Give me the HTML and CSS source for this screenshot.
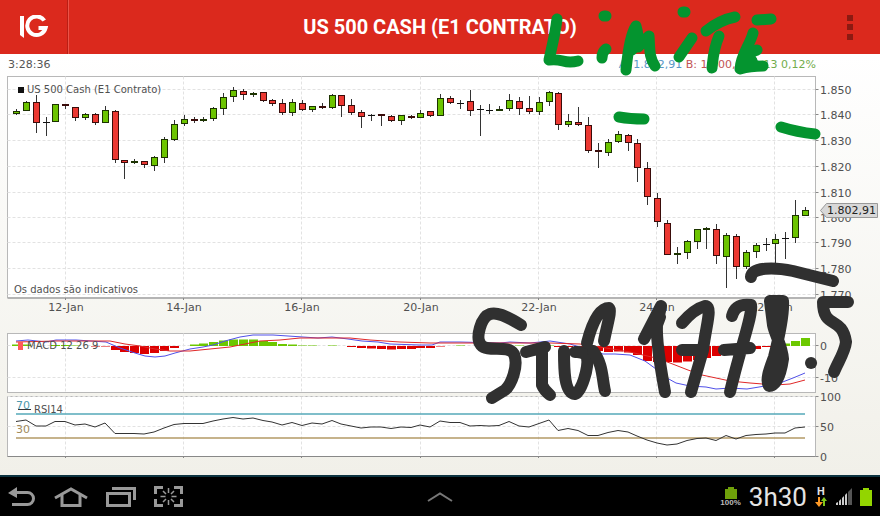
FILE: index.html
```
<!DOCTYPE html>
<html lang="pt">
<head>
  <meta charset="utf-8">
  <title>US 500 Cash (E1 Contrato)</title>
  <link rel="stylesheet" href="styles.css">
</head>
<body>
  <header class="topbar">
    <a class="logo" href="#" aria-label="IG">
      <svg width="30" height="24" viewBox="0 0 30 24">
        <path d="M1 1h4v22L1 20z" fill="#fff"/>
        <path d="M25.300 5.500A9.300 9.300 0 1 0 26.600 13H19.500" fill="none" stroke="#fff" stroke-width="4"/>
      </svg>
    </a>
    <h1 class="title">US 500 CASH (E1 CONTRATO)</h1>
    <button class="menu-btn" aria-label="Menu">
      <svg width="6" height="25" viewBox="0 0 6 25" fill="#8c1a12">
        <rect width="6" height="6"/>
        <rect y="9" width="6" height="6"/>
        <rect y="19" width="6" height="6"/>
      </svg>
    </button>
  </header>

  <main class="content">
    <div class="quote">
      <span class="time">3:28:36</span>
      <span class="prices">
        <span class="ask">A: 1.802,91</span>
        <span class="bid">B: 1.800,61</span>
        <span class="change">2,13 0,12%</span>
      </span>
    </div>

    <!-- The three panels share one coordinate space -->
    <svg class="chart" id="price" viewBox="0 74 880 252"></svg>
    <svg class="chart" id="macd" viewBox="0 326 880 68"></svg>
    <svg class="chart" id="rsi" viewBox="0 394 880 81"></svg>
  </main>

  <footer class="navbar">
    <div class="nav-keys">
      <button class="key" aria-label="Voltar">
        <svg width="28" height="20" viewBox="0 0 28 20">
          <path d="M0 6l9-6v4h10.500a7.500 7.500 0 0 1 0 15H4v-3h15.500a4.500 4.500 0 0 0 0-9H9v4z" fill="#999"/>
        </svg>
      </button>
      <button class="key" aria-label="Início">
        <svg width="34" height="20" viewBox="0 0 34 20" fill="none" stroke="#999" stroke-width="3">
          <path d="M1 11L17 2l16 9"/>
          <path d="M8 8v10.500h18V8"/>
        </svg>
      </button>
      <button class="key" aria-label="Recentes">
        <svg width="30" height="20" viewBox="0 0 30 20" fill="none" stroke="#999" stroke-width="3">
          <path d="M1.500 6.500h22v12h-22z"/>
          <path d="M6 1.500h22.500V13"/>
        </svg>
      </button>
      <button class="key" aria-label="Captura de tela">
        <svg width="29" height="21" viewBox="0 0 29 21" fill="none" stroke="#999" stroke-width="3">
          <path d="M1.500 8V1.500H9M20 1.500h7.500V8M1.500 13v6.500H9M20 19.500h7.500V13"/>
          <path d="M14.500 2v5M14.500 14v5M6.500 10.500h5M17.500 10.500h5M9 5l3 3M20 5l-3 3M9 16l3-3M20 16l-3-3" stroke-width="1.500"/>
        </svg>
      </button>
    </div>
    <button class="key" aria-label="Abrir painel">
      <svg width="26" height="10" viewBox="0 0 26 10">
        <path d="M1 9l12-7.500L25 9" fill="none" stroke="#777" stroke-width="2"/>
      </svg>
    </button>
    <div class="status">
      <span class="charge">
        <svg width="12" height="12" viewBox="0 0 12 12" fill="#6fa00a">
          <path d="M3 0h6v2h3v10H0V2h3z"/>
        </svg>
        <span>100%</span>
      </span>
      <span class="clock">3h30</span>
      <span class="network">
        <span>H</span>
        <svg width="12" height="10" viewBox="0 0 12 10">
          <path d="M3 0h2v5h3L4 10 0 5h3z" fill="#ff9a26"/>
          <path d="M8 9h2V4h2L9 0 6 4h2z" fill="#7fc51a"/>
        </svg>
      </span>
      <svg width="17" height="17" viewBox="0 0 17 17">
        <path d="M1 17v-2l2-1v3zM4 17v-4l2-2v6zM7 17v-7l2-2v9zM10 17V7l2-2v12z" fill="#ccc"/>
        <path d="M13 17V4l4-4v17z" fill="#555"/>
      </svg>
      <svg width="12" height="18" viewBox="0 0 12 18" fill="#93d500">
        <path d="M3 0h6v2h3v16H0V2h3z"/>
      </svg>
    </div>
  </footer>

  <!-- Hand-drawn notes on top of the screen -->
  <svg class="notes" viewBox="0 0 880 516">
    <g class="pen green">
      <path d="M557 19C555 35 552 46 549 60Q556 59 563 61T578 61"/>
      <path d="M604 16h2M606 49Q602 52 602 58"/>
      <path d="M626 70C628 50 631 33 636 26Q639 36 638 47L649 36C650 50 649 57 655 66M632 50l8 -12M634 36v10"/>
      <path d="M683 12h2M692 38L679 57"/>
      <path d="M706 31Q720 20 735 17M719 36C713 50 713 60 712 68"/>
      <path d="M757 20L771 19"/>
      <path d="M753 33C750 45 741 54 740 69Q750 66 763 66M757 50L746 54L744 64L752 61L747 54"/>
      <path d="M619 117Q630 119 644 119M781 127Q797 132 815 134"/>
    </g>
    <g class="pen dark">
      <path d="M751 277C752 267 774 267 793 271L833 281"/>
      <path d="M521 325C505 315 496 312 490 314C481 317 475 338 481 345C488 353 508 344 514 354C519 366 511 385 505 390L492 398"/>
      <path d="M526 352L545 347M542 350V385Q544 390 550 395"/>
      <path d="M564 351C564 368 564 393 575 394C581 393 589 368 587 357C584 351 578 352 575 352"/>
      <path d="M587 343C592 323 599 308 609 308C612 310 607 325 604 341M593 351C603 364 602 378 605 391"/>
      <path d="M644 339L661 306L657 325C656 345 662 375 665 392M657 325l3 -8"/>
      <path d="M682 323Q694 309 705 306C713 306 706 325 703 350L691 392M682 350h21"/>
      <path d="M732 316C735 305 743 304 751 305C753 315 741 345 730 392M724 350L750 348"/>
      <path d="M770 301H783C784 315 777 345 774 357C770 368 765 380 769 386C777 386 781 373 783 359C782 345 775 335 773 325L770 301L781 308L775 325"/>
      <path d="M811 363h0.100"/>
      <path d="M848 302H823C823 330 842 315 846 342C845 352 838 362 834 372"/>
    </g>
  </svg>

  <script src="chart.js"></script>
</body>
</html>
```
FILE: styles.css
```
* {
  box-sizing: border-box;
}
body {
  margin: 0;
  min-height: 100vh;
  display: flex;
  flex-direction: column;
  position: relative;
  font-family: "DejaVu Sans", sans-serif;
  background: #000;
}
button {
  border: none;
  background: none;
  padding: 0;
  cursor: pointer;
}
svg {
  display: block;
}
/* Top bar */
.topbar {
  display: grid;
  grid-template-columns: 69px 1fr 69px;
  height: 54px;
  background: #db291d;
}
.logo {
  display: flex;
  align-items: center;
  padding-left: 19px;
  border-right: 1px solid #ec5348;
  box-shadow: inset -1px 0 #b81f15;
}
.title {
  margin: 0;
  align-self: center;
  text-align: center;
  color: #fff;
  font-family: Roboto, sans-serif;
  font-size: 20px;
  font-weight: 700;
  line-height: 54px;
  white-space: nowrap;
}
.menu-btn {
  display: flex;
  align-items: center;
  justify-content: center;
  padding-left: 8px;
}
/* Quote row and charts */
.content {
  flex: 1;
  background: linear-gradient(to bottom, #fff, #f1f0e9);
}
.quote {
  display: flex;
  justify-content: space-between;
  align-items: center;
  height: 20px;
  padding: 0 64px 0 8px;
  font-size: 11px;
  color: #555;
}
.ask {
  color: #5a98c8;
}
.bid {
  color: #c25454;
}
.change {
  color: #72ac4c;
}
.chart {
  width: 100%;
  height: auto;
  overflow: visible;
}
.chart text {
  font-size: 10px;
  fill: #505050;
}
.chart .date {
  font-size: 11px;
  text-anchor: middle;
}
.chart .scale {
  font-size: 11px;
}
.chart .tag-text {
  font-size: 11px;
  fill: #222;
}
.chart .over {
  fill: #4d9aae;
  font-size: 11px;
}
.chart .under {
  fill: #a08a5c;
  font-size: 11px;
}
.panel {
  fill: #fff;
  stroke: #b8b8b8;
}
.grid {
  stroke: #e2e2e2;
  stroke-dasharray: 3 2;
}
.axis {
  stroke: #b4b4b4;
  stroke-width: 2;
}
.tick {
  stroke: #888;
}
.wick {
  stroke: #333;
}
.up {
  fill: #6cc400;
  stroke: #1c3300;
}
.down {
  fill: #ec3832;
  stroke: #3a0c0a;
}
.doji {
  fill: #111;
  stroke: none;
}
.bar-up {
  fill: #6cc800;
}
.bar-down {
  fill: #dc0000;
}
.line {
  fill: none;
  stroke: #333;
}
.macd-line {
  stroke: #5050e8;
}
.signal-line {
  stroke: #e02828;
}
.over-line {
  stroke: #55a8b8;
  stroke-width: 1.5;
}
.under-line {
  stroke: #b39a66;
  stroke-width: 1.5;
}
.tag {
  fill: #d8d8d8;
  stroke: #999;
}
/* Navigation bar */
.navbar {
  display: grid;
  grid-template-columns: 1fr auto 1fr;
  align-items: center;
  height: 41px;
  padding: 0 8px;
  background: #000;
  border-top: 2px solid #0d3441;
}
.nav-keys {
  display: flex;
  align-items: center;
  gap: 18px;
}
.status {
  display: flex;
  align-items: center;
  justify-content: flex-end;
  gap: 8px;
  color: #e4e4e4;
}
.charge {
  display: flex;
  flex-direction: column;
  align-items: center;
  font: bold 8px/8px "Liberation Sans", sans-serif;
  color: #bbb;
}
.clock {
  font: 26px/30px Roboto, sans-serif;
}
.network {
  display: flex;
  flex-direction: column;
  align-items: center;
  font: bold 11px/10px Roboto, sans-serif;
}
/* Pen notes */
.notes {
  position: absolute;
  top: 0;
  left: 0;
  width: 100%;
  pointer-events: none;
}
.pen {
  fill: none;
  stroke-width: 11;
  stroke-linecap: round;
  stroke-linejoin: round;
}
.green {
  stroke: #04942f;
}
.dark {
  stroke: #303030;
  stroke-width: 12;
}
```
FILE: chart.js
```
const LEFT = 7.5;
const RIGHT = 815.5;
const dates = [[66, '12-Jan'], [184, '14-Jan'], [302, '16-Jan'], [421, '20-Jan'], [539, '22-Jan'], [657, '24-Jan'], [775, '26-Jan']];

// high, top, bottom, low, direction
const candles = [
  [109,111,114,115,'u'], [101,102,111,111,'u'], [95,102,123,133,'d'], [117,122,123,136,'k'], [104,104,122,122,'u'],
  [104,104,106,109,'d'], [107,107,118,121,'d'], [113,114,118,120,'u'], [113,114,123,125,'d'], [106,110,123,123,'u'],
  [110,111,160,163,'d'], [160,160,163,179,'d'], [159,161,163,164,'u'], [161,161,165,168,'d'], [156,157,166,171,'u'],
  [137,139,158,163,'u'], [120,124,140,141,'u'], [115,119,124,126,'u'], [117,119,121,123,'d'], [117,119,121,122,'u'],
  [107,108,119,121,'u'], [93,97,109,115,'u'], [87,90,97,102,'u'], [89,91,95,100,'d'], [92,93,95,97,'u'],
  [92,92,101,102,'d'], [99,100,104,106,'d'], [99,103,113,115,'d'], [99,102,113,116,'u'], [100,103,110,111,'d'],
  [106,106,110,112,'u'], [103,106,108,109,'d'], [94,95,108,109,'u'], [95,95,106,117,'d'], [99,105,113,115,'d'],
  [110,112,117,128,'d'], [114,115,116,121,'k'], [114,114,116,126,'d'], [115,116,121,122,'d'], [115,115,121,125,'u'],
  [115,116,118,119,'d'], [110,113,118,118,'u'], [111,111,116,117,'d'], [94,98,116,116,'u'], [96,98,103,104,'d'],
  [100,103,104,109,'k'], [90,101,111,116,'d'], [105,109,110,136,'k'], [104,110,111,114,'k'], [106,109,111,111,'u'],
  [94,100,109,111,'u'], [97,101,109,115,'d'], [96,108,112,114,'d'], [97,102,112,115,'u'], [91,92,102,106,'u'],
  [92,93,125,130,'d'], [114,121,125,127,'u'], [107,122,125,126,'d'], [117,125,151,153,'d'], [143,150,152,168,'d'],
  [139,142,153,156,'u'], [131,134,142,143,'u'], [134,135,143,151,'d'], [139,143,168,182,'d'], [162,168,197,205,'d'],
  [193,198,222,227,'d'], [220,223,255,255,'d'], [247,253,255,264,'u'], [240,241,253,259,'u'], [229,229,242,249,'u'],
  [227,228,230,249,'u'], [224,229,256,264,'d'], [233,235,257,288,'u'], [234,236,267,279,'d'], [250,252,267,269,'u'],
  [243,245,252,258,'u'], [238,244,245,251,'k'], [234,239,244,268,'u'], [232,238,239,259,'k'], [200,215,238,243,'u'],
  [207,210,216,216,'u']
];

const histogram = [
  1.5, 1.5, 0, 0, 1, 1, 0.5, 0, -0.5, -0.5, -4, -6, -7, -8, -7, -5, -2, 0, 1.5, 2.5,
  4, 5.5, 6.5, 6.5, 6.5, 5, 4, 2, 1.5, 0.5, 0.5, 0, 0.5, 0, -1, -2, -2.5, -3, -3.5, -3,
  -3, -2, -2, -0.5, 0, 0.5, 0, 0.5, 0, 0, 0, 0.5, 0, 0.5, 0.5, -1, -1, -2, -3, -5,
  -6, -5.5, -6.5, -9, -15, -16, -16, -16.5, -15.5, -14, -12, -10, -9, -7, -5, -3, -1, -0.5, 2.5, 5,
  8
];

const macdLine = '16,341 28,340 46,342 56,340 76,340 106,342 120,348 135,353 145,356 155,357 165,356 175,353 190,349 203,347 213,345 225,341 240,337 253,335 273,335 303,337 318,338 332,337 348,339 362,341 378,342 390,344 420,345 432,345 440,342 460,342 500,343 510,342 530,343 550,341 570,344 590,350 603,354 615,354 630,355 645,361 656,369 667,378 676,383 690,386 706,387 716,389 730,388 747,389 765,386 780,383 793,378 805,373';
const signalLine = '16,342 56,341 110,341 125,344 140,346 155,349 170,351 190,351 210,349 230,347 245,344 260,341 280,340 300,338 350,338 370,340 400,342 430,343 550,343 580,344 600,347 630,352 656,358 670,363 688,370 702,375 716,378 730,381 750,383 775,385 790,384 805,380';

const rsi = [
  421.5, 420, 426, 426, 421.5, 421.5, 425, 424, 427, 423, 433.5, 433.5, 433.5, 434, 432, 428, 424.5, 423.5, 423.5, 423.5,
  421, 419, 417.5, 419, 418, 420.5, 422, 425, 422.5, 425.5, 423, 424, 420.5, 424, 426, 428, 427, 427, 428.5, 427,
  427.5, 425, 427, 421, 422.5, 422.5, 426, 425.5, 426, 425.5, 421.5, 426, 427, 423.5, 420, 430.5, 428.5, 430.5, 435.5, 435.5,
  432.5, 430.5, 432, 436, 440, 443, 445, 444, 440.5, 438.5, 438, 440.5, 435.5, 439, 435.5, 434.5, 434, 433, 433, 428,
  427
];

const xAt = i => Math.round(16 + i * 9.863);

const line = (cls, x1, y1, x2, y2) => `<line class="${cls}" x1="${x1}" y1="${y1}" x2="${x2}" y2="${y2}"/>`;
const rect = (cls, x, y, w, h) => `<rect class="${cls}" x="${x}" y="${y}" width="${w}" height="${h}"/>`;
const text = (cls, x, y, s) => `<text class="${cls}" x="${x}" y="${y}">${s}</text>`;

function panel(top, bottom, rows) {
  let out = rect('panel', LEFT, top, RIGHT - LEFT, bottom - top);
  dates.forEach(([x]) => out += line('grid', x - 0.5, top, x - 0.5, bottom));
  rows.forEach(([y, label]) => {
    out += line('grid', LEFT, y, RIGHT, y);
    out += line('tick', RIGHT, y, RIGHT + 3, y);
    out += text('scale', 820, y + 4, label);
  });
  return out;
}

function drawPrice() {
  const rows = [89.5, 114.5, 140.5, 166.5, 192.5, 217.5, 242.5, 268.5, 294.5].map((y, i) => [y, `1.${850 - i * 10}`]);
  let out = panel(76.5, 297.5, rows);
  out += line('axis', LEFT, 298, RIGHT, 298);
  dates.forEach(([x, label]) => {
    out += line('tick', x - 0.5, 298, x - 0.5, 300);
    out += text('date', x, 311, label);
  });
  candles.forEach(([high, top, bottom, low, dir], i) => {
    const x = xAt(i);
    out += line('wick', x + 0.5, high, x + 0.5, low);
    if (dir === 'k') {
      out += rect('doji', x - 3, top, 7, 1);
    } else {
      out += rect(dir === 'u' ? 'up' : 'down', x - 2.5, top + 0.5, 6, Math.max(bottom - top - 1, 1));
    }
  });
  out += rect('doji', 18, 87, 6, 6);
  out += text('', 27, 93, 'US 500 Cash (E1 Contrato)');
  out += text('', 14, 293, 'Os dados são indicativos');
  out += '<path class="tag" d="M820.5 210.500l6-7h51v14h-51z"/>';
  out += text('tag-text', 827, 214, '1.802,91');
  document.getElementById('price').innerHTML = out;
}

function drawMacd() {
  let out = panel(333.5, 392.5, [[345.5, '0'], [377.5, '-10']]);
  histogram.forEach((h, i) => {
    if (h) out += rect(h > 0 ? 'bar-up' : 'bar-down', xAt(i) - 4, h > 0 ? 346 - h : 346, 9, Math.abs(h));
  });
  out += `<polyline class="line macd-line" points="${macdLine}"/>`;
  out += `<polyline class="line signal-line" points="${signalLine}"/>`;
  out += '<rect x="18" y="342" width="5" height="8" fill="#ff5a5a"/>';
  out += text('', 27, 349, 'MACD 12 26 9');
  document.getElementById('macd').innerHTML = out;
}

function drawRsi() {
  let out = panel(396.5, 456.5, [[396.5, '100'], [426.5, '50'], [456.5, '0']]);
  out += line('tick', LEFT, 456.5, RIGHT, 456.5);
  dates.forEach(([x]) => out += line('tick', x - 0.5, 456, x - 0.5, 458));
  out += line('over-line', 16, 414, 805, 414);
  out += line('under-line', 16, 438, 805, 438);
  out += `<polyline class="line" points="${rsi.map((y, i) => xAt(i) + ',' + y).join(' ')}"/>`;
  out += text('over', 16, 409, '70');
  out += text('under', 16, 433, '30');
  out += line('line', 18, 409.5, 31, 409.5);
  out += text('', 34, 413, 'RSI14');
  document.getElementById('rsi').innerHTML = out;
}

drawPrice();
drawMacd();
drawRsi();
```
